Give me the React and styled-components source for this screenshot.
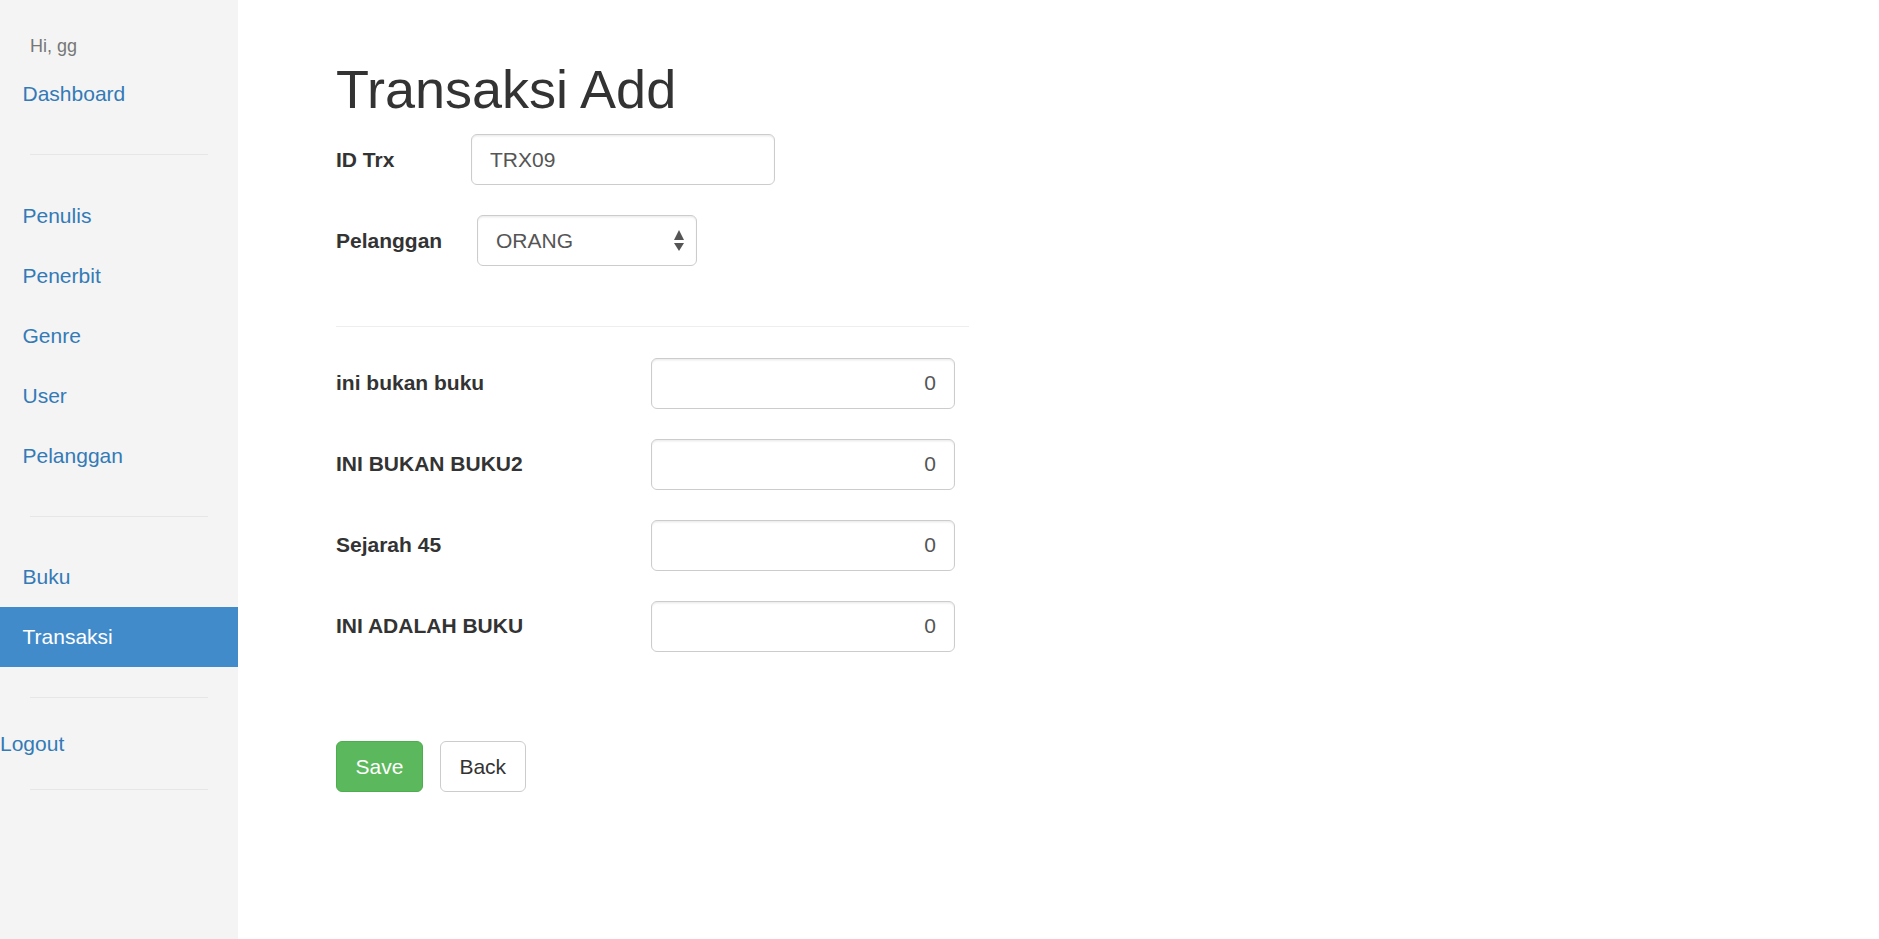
import React, { useState } from "react";
import styled, { createGlobalStyle } from "styled-components";

const GlobalStyle = createGlobalStyle`
  body {
    margin: 0;
    font-family: "Liberation Sans", Arial, sans-serif;
    color: #333;
    background: #fff;
  }
  * { box-sizing: border-box; }
`;

const Page = styled.div`
  display: flex;
  min-height: 100vh;
`;

// Left menu
const Sidebar = styled.aside`
  width: 238px;
  flex-shrink: 0;
  background: #f4f4f4;
  padding-top: 33px;
`;

const Greeting = styled.div`
  padding-left: 30px;
  margin-bottom: 4px;
  font-size: 18px;
  line-height: 27px;
  color: #777;
`;

const NavList = styled.ul`
  list-style: none;
  margin: 0;
  padding: 0;
`;

const NavLink = styled.a`
  display: block;
  padding: 15px 22.5px;
  font-size: 21px;
  line-height: 30px;
  text-decoration: none;
  color: ${({ $active }) => ($active ? "#fff" : "#337ab7")};
  background: ${({ $active }) => ($active ? "#428bca" : "transparent")};
  cursor: pointer;
`;

const SideRule = styled.hr`
  margin: 30px 30px 30.5px;
  border: 0;
  border-top: 1px solid #e6e6e6;
`;

const LogoutLink = styled.a`
  display: block;
  font-size: 21px;
  line-height: 30px;
  color: #337ab7;
  text-decoration: none;
  cursor: pointer;
`;

// Main area
const Main = styled.main`
  flex: 1;
  padding: 30px 0 0 98px;
`;

const Title = styled.h1`
  margin: 30px 0 15px;
  font-size: 54px;
  font-weight: 400;
  line-height: 1.1;
  color: #333;
`;

const FieldRow = styled.div`
  display: flex;
  align-items: center;
  margin-bottom: ${({ $last }) => ($last ? "0" : "30px")};
`;

const Label = styled.label`
  width: ${({ $width }) => $width}px;
  flex-shrink: 0;
  font-size: 21px;
  font-weight: 700;
  color: #333;
`;

const TextInput = styled.input`
  width: 304px;
  height: 51px;
  padding: 9px 18px;
  font-family: inherit;
  font-size: 21px;
  color: #555;
  text-align: ${({ $align }) => $align || "left"};
  background: #fff;
  border: 1px solid #ccc;
  border-radius: 6px;
  box-shadow: inset 0 1.5px 1.5px rgba(0, 0, 0, 0.075);
  outline: none;
`;

const SelectWrap = styled.div`
  position: relative;
  width: 220px;
`;

const Select = styled.select`
  appearance: none;
  width: 100%;
  height: 51px;
  padding: 9px 40px 9px 18px;
  font-family: inherit;
  font-size: 21px;
  color: #555;
  background: #fff;
  border: 1px solid #ccc;
  border-radius: 6px;
  box-shadow: inset 0 1.5px 1.5px rgba(0, 0, 0, 0.075);
  outline: none;
`;

const SelectArrows = styled.svg`
  position: absolute;
  right: 13px;
  top: 15px;
  pointer-events: none;
`;

const Rule = styled.hr`
  width: 633px;
  margin: 60px 0 30.5px;
  border: 0;
  border-top: 1px solid #eee;
`;

const Actions = styled.div`
  display: flex;
  gap: 17px;
  margin-top: 89.5px;
`;

const Button = styled.button`
  height: 51px;
  padding: 0 18.5px;
  font-family: inherit;
  font-size: 21px;
  line-height: 30px;
  border-radius: 6px;
  cursor: pointer;
  color: ${({ $variant }) => ($variant === "success" ? "#fff" : "#333")};
  background: ${({ $variant }) => ($variant === "success" ? "#5cb85c" : "#fff")};
  border: 1px solid
    ${({ $variant }) => ($variant === "success" ? "#4cae4c" : "#ccc")};
`;

const books = [
  "ini bukan buku",
  "INI BUKAN BUKU2",
  "Sejarah 45",
  "INI ADALAH BUKU",
];

export default function App() {
  const [qty, setQty] = useState(books.map(() => 0));

  return (
    <>
      <GlobalStyle />
      <Page>
        <Sidebar>
          <Greeting>Hi, gg</Greeting>
          <NavList>
            <li><NavLink>Dashboard</NavLink></li>
          </NavList>
          <SideRule />
          <NavList>
            <li><NavLink>Penulis</NavLink></li>
            <li><NavLink>Penerbit</NavLink></li>
            <li><NavLink>Genre</NavLink></li>
            <li><NavLink>User</NavLink></li>
            <li><NavLink>Pelanggan</NavLink></li>
          </NavList>
          <SideRule />
          <NavList>
            <li><NavLink>Buku</NavLink></li>
            <li><NavLink $active>Transaksi</NavLink></li>
          </NavList>
          <SideRule />
          <LogoutLink>Logout</LogoutLink>
          <SideRule />
        </Sidebar>

        <Main>
          <Title>Transaksi Add</Title>
          <FieldRow>
            <Label $width={135}>ID Trx</Label>
            <TextInput defaultValue="TRX09" />
          </FieldRow>
          <FieldRow $last>
            <Label $width={141}>Pelanggan</Label>
            <SelectWrap>
              <Select defaultValue="ORANG">
                <option>ORANG</option>
              </Select>
              <SelectArrows width="10" height="22" viewBox="0 0 10 22">
                <polygon points="5,0 10,10 0,10" fill="#555" />
                <polygon points="0,13 10,13 5,21" fill="#555" />
              </SelectArrows>
            </SelectWrap>
          </FieldRow>

          <Rule />

          {books.map((title, i) => (
            <FieldRow key={title} $last={i === books.length - 1}>
              <Label $width={315}>{title}</Label>
              <TextInput
                $align="right"
                value={qty[i]}
                onChange={(e) => {
                  const next = [...qty];
                  next[i] = e.target.value;
                  setQty(next);
                }}
              />
            </FieldRow>
          ))}

          <Actions>
            <Button $variant="success">Save</Button>
            <Button>Back</Button>
          </Actions>
        </Main>
      </Page>
    </>
  );
}
